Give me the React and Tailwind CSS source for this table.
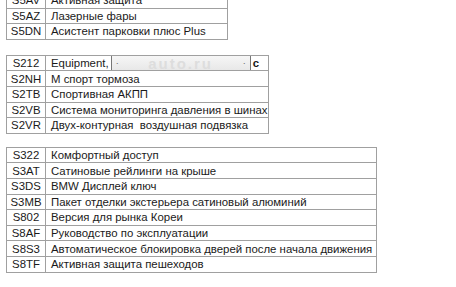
export default function App() {
  const t1 = [
    ["S5AV", "Активная защита"],
    ["S5AZ", "Лазерные фары"],
    ["S5DN", "Асистент парковки плюс Plus"],
  ];
  const t2 = [
    ["S2NH", "М спорт тормоза"],
    ["S2TB", "Спортивная АКПП"],
    ["S2VB", "Система мониторинга давления в шинах"],
    ["S2VR", "Двух-контурная  воздушная подвязка"],
  ];
  const t3 = [
    ["S322", "Комфортный доступ"],
    ["S3AT", "Сатиновые рейлинги на крыше"],
    ["S3DS", "BMW Дисплей ключ"],
    ["S3MB", "Пакет отделки экстерьера сатиновый алюминий"],
    ["S802", "Версия для рынка Кореи"],
    ["S8AF", "Руководство по эксплуатации"],
    ["S8S3", "Автоматическое блокировка дверей после начала движения"],
    ["S8TF", "Активная защита пешеходов"],
  ];
  const Row = ({ c, d }) => (
    <tr>
      <td className="border border-[#a0a0a0] h-[15.6px] text-center p-0 leading-[14px]">{c}</td>
      <td className="border border-[#a0a0a0] pl-[5px] p-0 leading-[14px] whitespace-pre">{d}</td>
    </tr>
  );
  const Cols = () => (
    <colgroup>
      <col className="w-[39px]" />
      <col />
    </colgroup>
  );
  return (
    <div className="w-[456px] h-[287px] overflow-hidden bg-white text-[#1a1a1a] text-[11.4px]" style={{ fontFamily: '"Liberation Sans", Arial, sans-serif' }}>
      <table className="table-fixed border-collapse ml-[6px] mt-[-8px] w-[222px]">
        <Cols />
        <tbody>
          {t1.map(([c, d]) => <Row key={c} c={c} d={d} />)}
        </tbody>
      </table>
      <table className="table-fixed border-collapse ml-[6px] mt-[15px] w-[263px]">
        <Cols />
        <tbody>
          <tr>
            <td className="border border-[#a0a0a0] h-[15.6px] text-center p-0 leading-[14px]">S212</td>
            <td className="border border-[#a0a0a0] pl-[5px] p-0 leading-[14px] whitespace-pre">
              <div className="flex items-center">
                <span>Equipment,</span>
                <span className="ml-[2px] w-[140px] h-[14px] border-l border-r border-[#777] bg-gradient-to-b from-[#f6f6f6] to-[#e8e8e8] flex items-center justify-between px-[4px] text-[9px] text-[#666]">
                  <span>·</span>
                  <span className="text-[15px] tracking-[2px] text-[#dddddd] font-bold leading-none">auto.ru</span>
                  <span>·</span>
                </span>
                <span className="ml-[2px] font-bold">c</span>
              </div>
            </td>
          </tr>
          {t2.map(([c, d]) => <Row key={c} c={c} d={d} />)}
        </tbody>
      </table>
      <table className="table-fixed border-collapse ml-[6px] mt-[13px] w-[371px]">
        <Cols />
        <tbody>
          {t3.map(([c, d]) => <Row key={c} c={c} d={d} />)}
        </tbody>
      </table>
    </div>
  );
}
